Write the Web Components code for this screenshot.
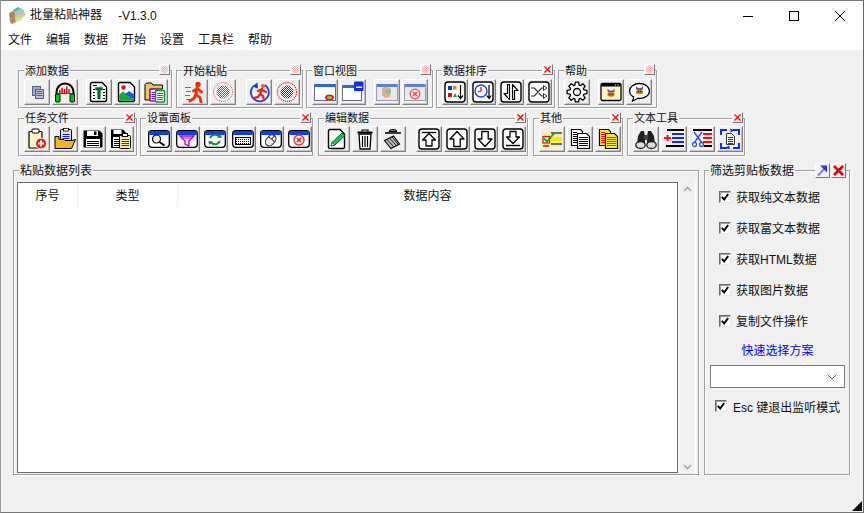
<!DOCTYPE html>
<html lang="zh-CN">
<head>
<meta charset="utf-8">
<title>批量粘贴神器</title>
<style>
html,body{margin:0;padding:0;background:#f0f0f0;overflow:hidden}
body{font:12px/16px "Liberation Sans","Noto Sans CJK SC",sans-serif;color:#111}
</style>
</head>
<body>
<app-window>
  <title-bar slot="top"></title-bar>
  <menu-bar slot="top"></menu-bar>
  <tool-row style="margin-top:20px;--ty:-8px;--pt:8px">
    <tool-group label="添加数据" style="width:154px;margin-left:17px">
      <tool-btn icon="copyDim"></tool-btn><tool-btn icon="headphone"></tool-btn>
      <tool-btn icon="docT" style="margin-left:6px"></tool-btn><tool-btn icon="image"></tool-btn><tool-btn icon="folderDocs"></tool-btn>
    </tool-group>
    <tool-group label="开始粘贴" style="width:127px;margin-left:4px">
      <tool-btn icon="runner"></tool-btn><tool-btn icon="stopDim"></tool-btn>
      <tool-btn icon="loopRunner" style="margin-left:8px"></tool-btn><tool-btn icon="stop"></tool-btn>
    </tool-group>
    <tool-group label="窗口视图" style="width:127px;margin-left:3px">
      <tool-btn icon="winOval"></tool-btn><tool-btn icon="winMin"></tool-btn>
      <tool-btn icon="winPaste" style="margin-left:6px"></tool-btn><tool-btn icon="winClose"></tool-btn>
    </tool-group>
    <tool-group label="数据排序" closable style="width:119px;margin-left:3px">
      <tool-btn icon="sortColor"></tool-btn><tool-btn icon="sortClock"></tool-btn><tool-btn icon="swap"></tool-btn><tool-btn icon="shuffle"></tool-btn>
    </tool-group>
    <tool-group label="帮助" style="width:99px;margin-left:3px">
      <tool-btn icon="gear"></tool-btn>
      <tool-btn icon="cowWin" style="margin-left:6px"></tool-btn><tool-btn icon="cowTalk"></tool-btn>
    </tool-group>
  </tool-row>
  <tool-row style="margin-top:10px;--ty:-9px;--pt:7px">
    <tool-group label="任务文件" closable style="width:119px;margin-left:17px">
      <tool-btn icon="clipNew"></tool-btn><tool-btn icon="clipOpen"></tool-btn><tool-btn icon="floppy"></tool-btn><tool-btn icon="floppyClip"></tool-btn>
    </tool-group>
    <tool-group label="设置面板" closable style="width:173px;margin-left:3px">
      <tool-btn icon="pSearch"></tool-btn><tool-btn icon="pFunnel"></tool-btn><tool-btn icon="pRecycle"></tool-btn><tool-btn icon="pKeyboard"></tool-btn><tool-btn icon="pMouse"></tool-btn><tool-btn icon="pClose"></tool-btn>
    </tool-group>
    <tool-group label="编辑数据" closable style="width:210px;margin-left:5px">
      <tool-btn icon="pencilDoc"></tool-btn><tool-btn icon="trash"></tool-btn><tool-btn icon="trashTilt"></tool-btn>
      <tool-btn icon="moveTop" style="margin-left:8px"></tool-btn><tool-btn icon="moveUp"></tool-btn><tool-btn icon="moveDown"></tool-btn><tool-btn icon="moveBottom"></tool-btn>
    </tool-group>
    <tool-group label="其他" closable style="width:90px;margin-left:5px">
      <tool-btn icon="checklist"></tool-btn><tool-btn icon="docs"></tool-btn><tool-btn icon="docsYellow"></tool-btn>
    </tool-group>
    <tool-group label="文本工具" closable style="width:118px;margin-left:4px">
      <tool-btn icon="binoculars"></tool-btn><tool-btn icon="listPlus"></tool-btn><tool-btn icon="listCut"></tool-btn><tool-btn icon="docCycle"></tool-btn>
    </tool-group>
  </tool-row>
  <work-area>
    <data-list slot="list"></data-list>
    <filter-panel slot="side">
      <check-row>获取纯文本数据</check-row>
      <check-row>获取富文本数据</check-row>
      <check-row>获取HTML数据</check-row>
      <check-row>获取图片数据</check-row>
      <check-row>复制文件操作</check-row>
    </filter-panel>
  </work-area>
  <size-grip></size-grip>
</app-window>
<script>
const S = (b) => `<svg xmlns="http://www.w3.org/2000/svg" width="22" height="22" viewBox="0 0 22 22">${b}</svg>`;
const checker = (id,c) => `<defs><pattern id="${id}" width="2" height="2" patternUnits="userSpaceOnUse"><rect width="2" height="2" fill="#fff"/><rect width="1" height="1" fill="${c}"/><rect x="1" y="1" width="1" height="1" fill="${c}"/></pattern></defs>`;
const page = `<path d="M4 1.5h10l4.500 4.500v13a1.500 1.500 0 0 1-1.500 1.500H4A1.500 1.500 0 0 1 2.500 19V3A1.500 1.500 0 0 1 4 1.500z" fill="#fff" stroke="#000" stroke-width="1.400"/>`;
const win = (o,extra) => `<g opacity="${o}"><rect x="0.5" y="3.5" width="21" height="16" fill="#e8e8f0" stroke="#8c8ca8"/><rect x="1" y="3" width="20" height="3" fill="#3a6fd8"/></g>${extra||''}`;
const frame = (b) => `<rect x="1" y="1" width="20" height="20" rx="3" fill="#fff" stroke="#000" stroke-width="1.400"/>${b}`;
const panel = (b) => `<rect x="0.7" y="2.7" width="20.6" height="16.6" rx="3" fill="#fff" stroke="#000" stroke-width="1.300"/><path d="M1.400 7V5a2 2 0 0 1 2-2h15.200a2 2 0 0 1 2 2v2z" fill="#0a3cf0"/>${b}`;
const lines = (ys,x1,x2,c,w) => ys.map(y=>`<path d="M${x1} ${Math.floor(y)+.5}H${x2}" stroke="${c}" stroke-width="${w||1}"/>`).join('');
const gearPath = (() => {
  let d='', n=8, cx=11, cy=11;
  for(let i=0;i<n;i++){
    const a=i*2*Math.PI/n, s=[[-.30,7.2],[-.17,10],[.17,10],[.30,7.2]];
    s.forEach(([o,r],j)=>{ d+=(i===0&&j===0?'M':'L')+(cx+r*Math.cos(a+o)).toFixed(1)+' '+(cy+r*Math.sin(a+o)).toFixed(1); });
  }
  return d+'z';
})();
const cow = (x,y) => `<g transform="translate(${x} ${y})"><path d="M0 1l2 2h3l2-2v3l-1 1H1L0 4z" fill="#5a5ab0"/><ellipse cx="3.5" cy="7" rx="3.6" ry="2.2" fill="#c8780a"/><circle cx="2.3" cy="6.6" r=".6" fill="#000"/><circle cx="4.7" cy="6.6" r=".6" fill="#000"/></g>`;
const ICONS = {
  copyDim:`<rect x="6.500" y="5.500" width="8" height="9" fill="#a8a8d0" stroke="#55607a"/><rect x="9.500" y="8.500" width="8" height="9" fill="#c0c0d8" stroke="#55607a"/>${lines([10,12,14],10.5,16.5,'#55607a')}`,
  headphone:`<path d="M2.500 14v-3a8.500 8.500 0 0 1 17 0v3" fill="none" stroke="#000" stroke-width="2"/><rect x="1.500" y="13" width="4.500" height="8" rx="1" fill="#0c0" stroke="#000"/><rect x="16" y="13" width="4.500" height="8" rx="1" fill="#0c0" stroke="#000"/><path d="M5 12V9h1.600v3zM7.300 12V7h1.600v5zM9.700 12V8h1.500v4zM12 12V5.500h1.500V12zM14.300 12V8h1.500v4z" fill="#e01010"/><path d="M4 12.500h14" stroke="#e01010"/>`,
  docT:`${page}${lines([4],5,9,'#000')}${lines([8,11,14,17],5,7,'#000')}${lines([8,11,14,17],15,17,'#000')}<path d="M7.500 6.500h7v2.500h-2.200v9h-2.600V9H7.500z" fill="#0a6a1e" stroke="#063" stroke-width=".5"/>`,
  image:`${page}<circle cx="7.500" cy="6.500" r="2.200" fill="#f01010"/><path d="M3.200 19.800v-6l4-3.500 6 6 5 2v1.500z" fill="#10b020"/><path d="M9 13l4-3 5.300 3.500V18l-4-1z" fill="#1060e0"/>`,
  folderDocs:`<path d="M1 19V3.500L2.500 2h5l1.500 2h9.500v4H6v11z" fill="#f4c84a" stroke="#000"/><rect x="6" y="8" width="7" height="12" rx="1" fill="#fff" stroke="#a000e0" stroke-width="1.500"/>${lines([11,13,15,17],7.500,11.500,'#5020d0')}<rect x="11.500" y="9.500" width="9" height="11.500" rx="1" fill="#fff" stroke="#009a20" stroke-width="1.500"/>${lines([12,14,16,18],13,19,'#009a20')}`,
  runner:`<path d="M1 6.500h6M2 10.500h5M1 14.500h5M2 18.500h5" stroke="#b85a18" stroke-width="1"/><circle cx="14" cy="3.500" r="2.700" fill="#f03000"/><path d="M13 6.500l-1 7 4 3 1 4.500M11.800 13l-1.500 4-4.300 3M13 8l-3.500 2M14 8l3.500 3" fill="none" stroke="#f03000" stroke-width="2.800" stroke-linecap="round" stroke-linejoin="round"/>`,
  stopDim:checker('cd','#c83838')+`<circle cx="11" cy="11" r="9.500" fill="none" stroke="#f04040" stroke-dasharray="1 1"/><circle cx="11" cy="11" r="6.500" fill="url(#cd)"/>`,
  stop:checker('cs','#c80000')+`<circle cx="11" cy="11" r="9.500" fill="none" stroke="#f01010" stroke-width="1.300" stroke-dasharray="1 1"/><circle cx="11" cy="11" r="6.500" fill="url(#cs)"/>`,
  loopRunner:`<path d="M5 5.500A9 9 0 1 0 17 4" fill="none" stroke="#1840e0" stroke-width="1.800"/><path d="M9.500 1.500L4 5.500l6 2z" fill="#1840e0"/><circle cx="15" cy="5" r="2" fill="#f05050"/><path d="M14 8l-2 5 3 2 1 4M12 13l-2 3-4 1M14 8l-4 2M14 9l4 2" fill="none" stroke="#e82020" stroke-width="2.200" stroke-linecap="round" stroke-dasharray="2 .6"/>`,
  winOval:`<rect x="0.500" y="3.500" width="21" height="16" fill="#fff" stroke="#6a6a88"/><rect x="1" y="3" width="20" height="3" fill="#2b67d6"/><ellipse cx="15.500" cy="16.500" rx="4.500" ry="3" fill="#e02020"/><ellipse cx="15.500" cy="16.500" rx="2.500" ry="1.500" fill="#a0c020"/>`,
  winMin:`<rect x="0.500" y="4.500" width="19" height="15" fill="#fff" stroke="#6a6a88"/><rect x="1" y="4" width="18" height="3" fill="#2b67d6"/><rect x="12" y="0.500" width="9.500" height="9.500" rx="1" fill="#0a2ff0"/><rect x="14" y="5.500" width="6" height="1.500" fill="#fff"/>`,
  winPaste:win(.85,`<path d="M6 7l5-2 4 3-1 8-5 1-3-3z" fill="#d8a080" opacity=".8"/><path d="M9 9l6-1v4l-4 2z" fill="#8fc08f"/>`),
  winClose:win(.85,`<circle cx="11" cy="13" r="4.800" fill="#fbe8e8" stroke="#e85050" stroke-width="1.300"/><path d="M9 11l4 4m0-4l-4 4" stroke="#e85050" stroke-width="1.500"/>`),
  sortColor:frame(`<rect x="4" y="5" width="4" height="4" fill="#1030d0"/><rect x="9" y="5" width="3.500" height="3.500" fill="#f08000"/><rect x="4" y="12" width="4" height="4" fill="#e01010"/><path d="M9 16l2-4 2 4z" fill="#10a040"/><path d="M16.500 4v13M14 14.500l2.500 3 2.500-3" fill="none" stroke="#000" stroke-width="1.200"/>`),
  sortClock:frame(`<circle cx="9" cy="10" r="6" fill="#fff" stroke="#2040e0" stroke-width="1.400"/><path d="M9 6v4l-3 1" fill="none" stroke="#e01010" stroke-width="1.300"/><path d="M17 4v13M14.800 14.500l2.200 3 2.200-3" fill="none" stroke="#000" stroke-width="1.200"/>`),
  swap:frame(`<path d="M9.500 3.500v15L4 12.500h3.500V3.500zM12.500 18.500v-15L18 9.500h-3.500v9z" fill="#fff" stroke="#000" stroke-width="1.200" stroke-linejoin="round"/>`),
  shuffle:frame(`<path d="M3 7h3.500l7 8H16M3 15h3.500l7-8H16" fill="none" stroke="#333" stroke-width="1.200"/><path d="M15.500 4.500L19 7l-3.500 2.500zM15.500 12.500L19 15l-3.500 2.500z" fill="#fff" stroke="#333"/>`),
  gear:`<path d="${gearPath}" fill="#fff" stroke="#000" stroke-width="1.300" stroke-linejoin="round"/><circle cx="11" cy="11" r="3.500" fill="#fff" stroke="#000" stroke-width="1.300"/>`,
  cowWin:`<rect x="1" y="2.500" width="20" height="17" rx="1.500" fill="#fff4c8" stroke="#000" stroke-width="1.300"/><rect x="1.500" y="3" width="19" height="2.500" fill="#000"/><path d="M15 4h1.200M17.500 4h1.200" stroke="#fff"/>${cow(7.500,6.500)}`,
  cowTalk:`<ellipse cx="11.500" cy="10" rx="10" ry="7.500" fill="#fff" stroke="#000" stroke-width="1.300"/><path d="M6 15.500L4.500 20l6-3" fill="#fff" stroke="#000" stroke-width="1.200"/><path d="M6.500 15.500l3 1" stroke="#fff" stroke-width="1.500"/>${cow(8,4)}`,
  clipNew:`<path d="M4 3.500h11a1 1 0 0 1 1 1V11l-3 9H4a1 1 0 0 1-1-1V4.500a1 1 0 0 1 1-1z" fill="#fff4c0" stroke="#000" stroke-width="1.200"/><rect x="6" y="1" width="7" height="4" rx="1" fill="#fff" stroke="#000"/><circle cx="15" cy="15.500" r="5.500" fill="#f01818" stroke="#fff"/><path d="M15 12.500v6M12 15.500h6" stroke="#fff" stroke-width="2"/>`,
  clipOpen:`<rect x="6.500" y="1.500" width="11" height="14" rx="1" fill="#dcdcff" stroke="#000"/><rect x="9.500" y="0.500" width="5" height="2.500" fill="#fff" stroke="#000" stroke-width=".8"/>${lines([6,8,10],8.500,15.500,'#2020c0')}<path d="M1 20.500V8.500h4v3h5l1 1h7l3.500-1-4 9z" fill="#f0b818" stroke="#000"/>`,
  floppy:`<path d="M1.500 2.500h16l3 3v14h-19z" fill="#000"/><rect x="5" y="3" width="11" height="5" fill="#fff"/><rect x="12" y="3.500" width="2.500" height="3.500" fill="#000"/><rect x="4" y="11" width="14" height="8" fill="#fff"/>${lines([13,15,17],5,17,'#000')}`,
  floppyClip:`<path d="M1 1.500h12l3 3V20H1z" fill="#000"/><rect x="3.500" y="2" width="8" height="4" fill="#fff"/><rect x="3" y="9" width="9" height="10" fill="#fff"/>${lines([11,13,15,17],4,9,'#000')}<rect x="9.500" y="7.500" width="11" height="13" rx="1" fill="#f0e8a0" stroke="#000"/><rect x="12.500" y="5.500" width="5" height="3" fill="#fff" stroke="#000"/>${lines([11,13,15,17],11.500,19,'#3030c0')}`,
  pSearch:panel(`<circle cx="8.500" cy="11" r="4" fill="#f4f0d8" stroke="#000" stroke-width="1.200"/><path d="M11.500 14l5 3.500" stroke="#000" stroke-width="2"/>`),
  pFunnel:panel(`<path d="M4 8h14l-5 5v5l-4-2v-3z" fill="#fbe0fb" stroke="#c000c0" stroke-width="1.300"/><path d="M5 10h12" stroke="#c000c0"/>`),
  pRecycle:panel(`<path d="M6 10a5.500 5.500 0 0 1 9-1.500" fill="none" stroke="#109030" stroke-width="2"/><path d="M16 13a5.500 5.500 0 0 1-9 1.500" fill="none" stroke="#109030" stroke-width="2"/><path d="M13 9.500l4.500.5-.5-4zM9 13.500l-4.500-.5.5 4z" fill="#109030"/>`),
  pKeyboard:panel(`<rect x="3.500" y="9.500" width="15" height="7" fill="#fff" stroke="#000"/><path d="M4 11.500h14M4 13.500h14M4 15.500h14" stroke="#000" stroke-dasharray="1 1"/>`),
  pMouse:panel(`<g transform="rotate(40 11 12)"><rect x="7" y="6.500" width="8" height="12" rx="4" fill="#f4f4f4" stroke="#333" stroke-width="1.100"/><path d="M7 11h8M11 6.500V11" stroke="#333"/></g>`),
  pClose:panel(`<circle cx="11" cy="12" r="5" fill="#fde8e8" stroke="#e83030" stroke-width="1.400"/><path d="M9 10l4 4m0-4l-4 4" stroke="#e83030" stroke-width="1.700"/>`),
  pencilDoc:`${page}<path d="M5 18l1-3.500L16 5l3 2.500L9 17z" fill="#20c050" stroke="#006020"/><path d="M5 18l1-3.500 2.500 2.500z" fill="#fff" stroke="#006020" stroke-width=".8"/>`,
  trash:`<path d="M8 3.500V2h6v1.500" fill="none" stroke="#000" stroke-width="1.200"/><path d="M3.500 4.500h15" stroke="#000" stroke-width="2"/><path d="M5 6h12l-1 15H6z" fill="#fff" stroke="#000" stroke-width="1.300"/><path d="M8.500 8v11M11 8v11M13.500 8v11" stroke="#000" stroke-width="1.200"/>`,
  trashTilt:`<path d="M7 3.500a4 2 0 0 1 8 0z" fill="#888" stroke="#000"/><path d="M3 5h16" stroke="#000" stroke-width="1.500"/><path d="M2.500 12.500l9-4.500 6 8-8.500 4.500z" fill="#bbb" stroke="#000" stroke-width="1.100"/><path d="M5 11.500l6.500 7M7.500 10l6.500 7M10 9l6 7" stroke="#222"/>`,
  moveTop:frame(`<path d="M4 4.500h14" stroke="#000" stroke-width="1.400"/><path d="M11 5.500l-6.500 6.500h3.500v6h6v-6h3.500z" fill="#fff" stroke="#000" stroke-width="1.300" stroke-linejoin="round"/>`),
  moveUp:frame(`<path d="M11 3.500l-7 7.500h3.800v7.500h6.400V11H18z" fill="#fff" stroke="#000" stroke-width="1.300" stroke-linejoin="round"/>`),
  moveDown:frame(`<path d="M11 18.500l-7-7.500h3.800V3.500h6.400V11H18z" fill="#fff" stroke="#000" stroke-width="1.300" stroke-linejoin="round"/>`),
  moveBottom:frame(`<path d="M4 17.500h14" stroke="#000" stroke-width="1.400"/><path d="M11 15.500l-6.500-6.500h3.500V3.500h6V9h3.500z" fill="#fff" stroke="#000" stroke-width="1.300" stroke-linejoin="round"/>`),
  checklist:`<rect x="1" y="3" width="20" height="16" fill="#f4f0a8"/><path d="M9 9h12v4H9z" fill="#ffe600"/><path d="M3 10.500l3 3 7-8" fill="none" stroke="#10a030" stroke-width="1.800"/><rect x="2" y="8.500" width="6.500" height="6.500" fill="none" stroke="#e01010" stroke-width="1.200"/><path d="M10 5h11M10 16h11" stroke="#444" stroke-width="1.600"/><path d="M2 18h6" stroke="#e01010" stroke-width="1.500"/>`,
  docs:`<path d="M2.500 1.500h9l2 2v14h-11z" fill="#fff" stroke="#000" stroke-width="1.200"/>${lines([4,6,8,10,12,14],4,8,'#000')}<path d="M8.500 5.500h9l3 3V20.500h-12z" fill="#fff" stroke="#000" stroke-width="1.200"/>${lines([9,11,13,15,17],10,19,'#000')}`,
  docsYellow:`<path d="M2.500 1.500h9l2 2v14h-11z" fill="#ffec20" stroke="#000" stroke-width="1.200"/>${lines([4,6,8,10,12,14],4,8,'#e81010')}<path d="M8.500 5.500h9l3 3V20.500h-12z" fill="#ffec20" stroke="#000" stroke-width="1.200"/>${lines([9,11,13,15,17],10,19,'#e81010')}`,
  binoculars:`<path d="M3 8l3-5h3l1 5v8H2z" fill="#222"/><path d="M19 8l-3-5h-3l-1 5v8h8z" fill="#222"/><rect x="9" y="7" width="4" height="5" fill="#444"/><ellipse cx="5.500" cy="17" rx="4.700" ry="3.500" fill="#ddd" stroke="#222" stroke-width="1.300"/><ellipse cx="16.500" cy="17" rx="4.700" ry="3.500" fill="#ddd" stroke="#222" stroke-width="1.300"/>`,
  listPlus:`<path d="M1 10h7M4.500 7v6" stroke="#f01010" stroke-width="2"/><path d="M9 6h12M9 10h12M9 14h12" stroke="#1030e0" stroke-width="2"/><path d="M4 2h17M3 18h18" stroke="#000" stroke-width="2"/>`,
  listCut:`<path d="M3 4l8 11M11 4l-8 11" stroke="#3050e0" stroke-width="1.400"/><circle cx="3.500" cy="16.500" r="2" fill="#fff" stroke="#3050e0" stroke-width="1.300"/><circle cx="10.500" cy="16.500" r="2" fill="#fff" stroke="#3050e0" stroke-width="1.300"/><path d="M12 6h9M12 10h9M12 14h9" stroke="#f01010" stroke-width="2"/><path d="M2 2h19M13 18h8" stroke="#000" stroke-width="2"/>`,
  docCycle:`<path d="M2 7V2h6M20 15v5h-6M14 2h6v5M8 20H2v-5" fill="none" stroke="#0a2ff0" stroke-width="2"/><path d="M11.500.500l4 2-4 2zM10.500 17.500l-4 2 4 2z" fill="#0a2ff0"/><path d="M7.500 5.500h5l3 3v8h-8z" fill="#eee" stroke="#333"/>${lines([9,11,13,15],9,14,'#333')}`
};

class Base extends HTMLElement {
  constructor(){ super(); this.attachShadow({mode:'open'}); }
  html(s){ this.shadowRoot.innerHTML = s; }
}
class AppWindow extends Base { connectedCallback(){ this.html(`<style>
  :host{display:flex;flex-direction:column;width:864px;height:513px;box-sizing:border-box;border:1px solid #777;border-left-color:#999;border-right-color:#666;background:#f0f0f0}
  .rows{display:flex;flex-direction:column;flex:1;min-height:0}
  </style><slot name="top"></slot><div class="rows"><slot></slot></div>`); } }
class TitleBar extends Base { connectedCallback(){ this.html(`<style>
  :host{display:flex;align-items:center;height:29px;background:#fff;flex:none}
  svg{display:block}
  .logo{margin-left:8px;margin-right:4px}
  .name{font-size:12px;color:#111;position:relative;top:-.5px}
  .ver{margin-left:16px;font:12px "Liberation Sans",sans-serif;color:#111}
  .sp{flex:1}
  .c{width:46px;height:29px;display:flex;align-items:center;justify-content:center}
  </style>
  <svg class="logo" width="17" height="17" viewBox="0 0 17 17"><path d="M0 6l6-3 1 12-4 2-2-2z" fill="#b08868"/><path d="M4 3l5-3 3 2-6 4z" fill="#58b080"/><path d="M5 5l7-4 3 2-8 5z" fill="#80d8d0"/><path d="M6 7l9-4 1 3-9 5z" fill="#f0a0c0"/><path d="M6 9l11-3-1 3-9 4z" fill="#a0e0a0"/><path d="M6 11l9-2-3 4-5 2z" fill="#f0d870"/></svg>
  <span class="name">批量粘贴神器</span><span class="ver">-V1.3.0</span><span class="sp"></span>
  <span class="c"><svg width="10" height="10"><path d="M0 5.500h10" stroke="#000"/></svg></span>
  <span class="c"><svg width="10" height="10"><rect x=".5" y=".5" width="9" height="9" fill="none" stroke="#000"/></svg></span>
  <span class="c"><svg width="10" height="10"><path d="M0 0l10 10M10 0L0 10" stroke="#000"/></svg></span>`); } }
class MenuBar extends Base { connectedCallback(){ this.html(`<style>
  :host{display:flex;height:20px;background:#fff;flex:none;padding-left:0;font-size:12px;line-height:20px;color:#111}
  span{padding:0 7px}
  </style>${['文件','编辑','数据','开始','设置','工具栏','帮助'].map(t=>`<span>${t}</span>`).join('')}`); } }
class ToolRow extends Base { connectedCallback(){ this.html(`<style>:host{display:flex;flex:none}</style><slot></slot>`); } }
class ToolGroup extends Base { connectedCallback(){
  const on = this.hasAttribute('closable');
  this.html(`<style>
  :host{display:block;position:relative;box-sizing:border-box;height:38px;border:1px solid #a0a0a0;box-shadow:1px 1px 0 #fff,inset 1px 1px 0 #fff;padding:var(--pt,8px) 0 0 5px;flex:none}
  .t{position:absolute;left:5px;top:var(--ty,-8px);padding:0 1px;background:#f0f0f0;font:11px/14px "Noto Sans CJK SC",sans-serif;color:#111;white-space:nowrap}
  .x{position:absolute;right:1px;top:-7px;width:11px;height:11px;box-sizing:border-box;background:#f0f0f0;border:1px solid;border-color:#fff #777 #777 #fff;display:flex;align-items:center;justify-content:center}
  .b{display:flex}
  svg{display:block}
  </style><span class="t">${this.getAttribute('label')}</span>
  <span class="x">${on?'<svg width="7" height="7"><path d="M.5.500l6 6m0-6l-6 6" stroke="#f00" stroke-width="1.200"/></svg>':'<svg width="7" height="7"><defs><pattern id="p" width="2" height="2" patternUnits="userSpaceOnUse"><rect width="2" height="2" fill="#fde8e8"/><rect width="1" height="1" fill="#f8a8a8"/><rect x="1" y="1" width="1" height="1" fill="#f8a8a8"/></pattern></defs><circle cx="3.500" cy="3.500" r="3.500" fill="url(#p)"/></svg>'}</span>
  <div class="b"><slot></slot></div>`); } }
class ToolBtn extends Base { connectedCallback(){ this.html(`<style>
  :host{display:flex;align-items:center;justify-content:center;box-sizing:border-box;width:26px;height:26px;margin-right:2px;background:#f0f0f0;border:1px solid;border-color:#fff #808080 #808080 #fff;box-shadow:inset -1px -1px 0 #c4c4c4;flex:none}
  svg{display:block;width:22px;height:22px}
  </style>${S(ICONS[this.getAttribute('icon')]||'')}`); } }
class WorkArea extends Base { connectedCallback(){ this.html(`<style>
  :host{display:flex;flex:none;margin-top:14px;padding-left:12px;height:305px}
  </style><slot name="list"></slot><slot name="side"></slot>`); } }
class DataList extends Base { connectedCallback(){ this.html(`<style>
  :host{display:flex;position:relative;box-sizing:border-box;width:686px;height:305px;border:1px solid #a0a0a0;box-shadow:1px 1px 0 #fff,inset 1px 1px 0 #fff;padding:11px 2px 1px 3px}
  .t{position:absolute;left:5px;top:-9px;padding:0 1px;background:#f0f0f0;font:12px/16px "Noto Sans CJK SC",sans-serif;color:#111}
  .box{width:661px;box-sizing:border-box;border:1px solid #6a6a6a;background:#fff;display:flex;flex-direction:column}
  .hd{display:grid;grid-template-columns:60px 100px 1fr;height:24px;font:12px/23px "Noto Sans CJK SC",sans-serif;text-align:center;color:#111}
  .hd span{border-right:1px solid #f0f0f0}
  .hd span:last-child{border-right:0}
  .sb{flex:1;display:flex;flex-direction:column;justify-content:space-between;align-items:center;padding:4px 0;border-left:1px solid #fff;border-right:1px solid #fff;margin-bottom:-1px}
  svg{display:block}
  </style><span class="t">粘贴数据列表</span>
  <div class="box"><div class="hd"><span>序号</span><span>类型</span><span>数据内容</span></div></div>
  <div class="sb"><svg width="9" height="6"><path d="M1 5l3.500-3.500L8 5" fill="none" stroke="#a6a6a6" stroke-width="1.600"/></svg><svg width="9" height="6"><path d="M1 1l3.500 3.500L8 1" fill="none" stroke="#a6a6a6" stroke-width="1.600"/></svg></div>`); } }
class FilterPanel extends Base { connectedCallback(){ this.html(`<style>
  :host{display:block;position:relative;box-sizing:border-box;width:146px;height:305px;margin-left:5px;border:1px solid #a0a0a0;box-shadow:1px 1px 0 #fff,inset 1px 1px 0 #fff;padding:10px 4px 0 5px}
  .t{position:absolute;left:4px;top:-9px;padding:0 1px;background:#f0f0f0;font:12px/16px "Noto Sans CJK SC",sans-serif;color:#111}
  .btns{position:absolute;right:3px;top:-8px;display:flex;gap:1px}
  .btns span{width:15px;height:15px;box-sizing:border-box;background:#f0f0f0;border:1px solid;border-color:#fff #777 #777 #fff;display:flex;align-items:center;justify-content:center}
  .link{display:block;height:18px;margin-top:5px;text-align:center;color:#0000f0;font:12px/18px "Noto Sans CJK SC",sans-serif}
  .sel{display:flex;align-items:center;justify-content:flex-end;height:23px;box-sizing:border-box;margin-top:6px;border:1px solid #7a7a7a;background:#fff;padding-right:7px}
  .esc{margin-top:8px}
  svg{display:block}
  slot{display:block}
  ::slotted(check-row){margin-left:9px}
  </style><span class="t">筛选剪贴板数据</span>
  <span class="btns">
  <span><svg width="13" height="13"><path d="M2 11.500L9.500 3.500" stroke="#8080ff" stroke-width="2"/><path d="M4 1.500h7v7z" fill="#3030f0"/></svg></span>
  <span><svg width="11" height="11"><path d="M1 1l9 9m0-9l-9 9" stroke="#e00000" stroke-width="2.600"/></svg></span></span>
  <slot></slot>
  <span class="link">快速选择方案</span>
  <div class="sel"><svg width="10" height="6"><path d="M.5.500L5 5l4.500-4.500" fill="none" stroke="#555"/></svg></div>
  <check-row class="esc" tight>Esc 键退出监听模式</check-row>`); } }
class CheckRow extends Base { connectedCallback(){
  const tight = this.hasAttribute('tight');
  this.html(`<style>
  :host{display:flex;align-items:center;height:${tight?20:31}px;font:12px "Liberation Sans","Noto Sans CJK SC",sans-serif;color:#111;gap:${tight?6:5}px;white-space:nowrap}
  i{display:flex;align-items:center;justify-content:center;width:12px;height:12px;box-sizing:border-box;background:#fff;border:1px solid;border-color:#6a6a6a #e8e8e8 #e8e8e8 #6a6a6a;box-shadow:inset 1px 1px 0 #a0a0a0}
  svg{display:block}
  </style><i><svg width="8" height="8"><path d="M.8 3.800l2.400 2.600L7.200 1" fill="none" stroke="#000" stroke-width="1.900"/></svg></i><slot></slot>`);
  if(tight){ this.style.marginLeft='5px'; }
} }
class SizeGrip extends Base { connectedCallback(){ this.html(`<style>
  :host{display:flex;justify-content:flex-end;align-items:flex-end;flex:1;padding:0 1px 1px 0}
  svg{display:block}
  </style><svg width="10" height="10"><path d="M10 0v10H0z" fill="#111"/></svg>`); } }
[['app-window',AppWindow],['title-bar',TitleBar],['menu-bar',MenuBar],['tool-row',ToolRow],['tool-group',ToolGroup],['tool-btn',ToolBtn],['work-area',WorkArea],['data-list',DataList],['filter-panel',FilterPanel],['check-row',CheckRow],['size-grip',SizeGrip]].forEach(([n,c])=>customElements.define(n,c));
</script>
</body>
</html>
